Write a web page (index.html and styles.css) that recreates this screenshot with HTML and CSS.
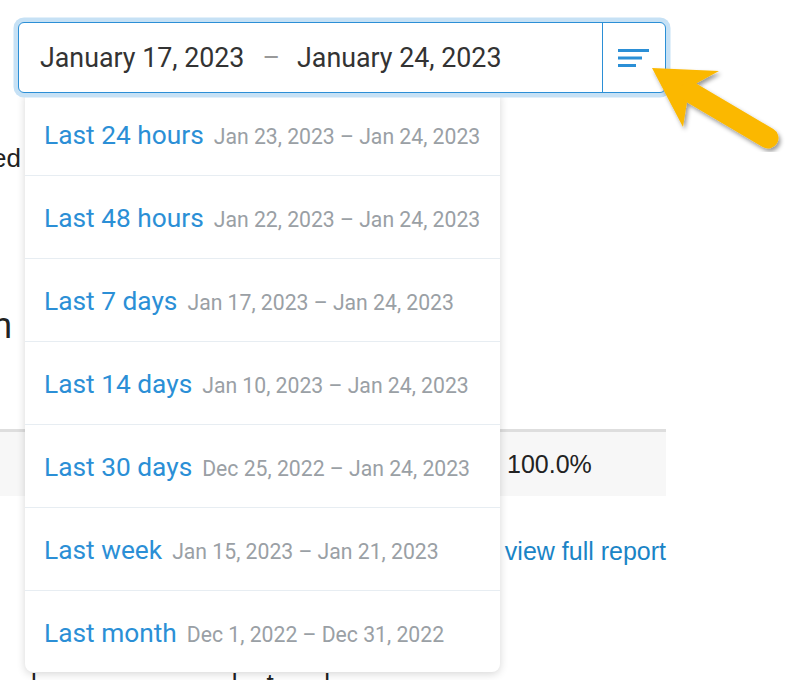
FILE: index.html
```html
<!DOCTYPE html>
<html>
<head>
<meta charset="utf-8">
<link rel="stylesheet" href="styles.css">
</head>
<body>
<div class="page">
  <div class="picker">
    <div class="dates">
      <span class="date">January 17, 2023</span>
      <span class="sep">–</span>
      <span class="date">January 24, 2023</span>
    </div>
    <div class="btn">
      <svg width="32" height="19" viewBox="0 0 32 19"><rect x="0" y="0" width="31" height="3" fill="#2b8fd6"/><rect x="0" y="7.5" width="24" height="3" fill="#2b8fd6"/><rect x="0" y="15" width="18" height="3" fill="#2b8fd6"/></svg>
    </div>
  </div>
  <div class="bg">
    <p class="frag1">ed</p>
    <p class="frag2">n</p>
    <div class="row"><span class="pct">100.0%</span></div>
    <div class="link-row"><a class="link">view full report</a></div>
    <p class="bottom">l&nbsp;&nbsp;&nbsp;&nbsp;&nbsp;&nbsp;&nbsp;&nbsp;&nbsp;&nbsp;&nbsp;&nbsp;&nbsp;&nbsp;&nbsp;&nbsp;&nbsp;&nbsp;&nbsp;&nbsp;&nbsp;&nbsp;&nbsp;&nbsp;&nbsp;&nbsp;&nbsp;l&nbsp;&nbsp;&nbsp;&nbsp;t&nbsp;&nbsp;&nbsp;&nbsp;&nbsp;&nbsp;&nbsp;l</p>
  </div>
  <ul class="menu">
    <li class="item"><span class="label">Last 24 hours</span><span class="range">Jan 23, 2023 – Jan 24, 2023</span></li>
    <li class="item"><span class="label">Last 48 hours</span><span class="range">Jan 22, 2023 – Jan 24, 2023</span></li>
    <li class="item"><span class="label">Last 7 days</span><span class="range">Jan 17, 2023 – Jan 24, 2023</span></li>
    <li class="item"><span class="label">Last 14 days</span><span class="range">Jan 10, 2023 – Jan 24, 2023</span></li>
    <li class="item"><span class="label">Last 30 days</span><span class="range">Dec 25, 2022 – Jan 24, 2023</span></li>
    <li class="item"><span class="label">Last week</span><span class="range">Jan 15, 2023 – Jan 21, 2023</span></li>
    <li class="item"><span class="label">Last month</span><span class="range">Dec 1, 2022 – Dec 31, 2022</span></li>
  </ul>
  <svg class="arrow" width="150" height="110" viewBox="0 0 150 110">
    <g filter="url(#sh)">
      <polygon points="12,18 79,21 57,33 47,52 43,77" fill="#fbb800"/>
      <line x1="50" y1="42" x2="128" y2="88" stroke="#fbb800" stroke-width="21" stroke-linecap="round"/>
    </g>
    <defs>
      <filter id="sh" x="-20%" y="-20%" width="140%" height="140%">
        <feDropShadow dx="2" dy="3" stdDeviation="2" flood-color="#000" flood-opacity="0.4"/>
      </filter>
    </defs>
  </svg>
</div>
</body>
</html>
```

FILE: styles.css
```css
html, body {
  margin: 0;
  padding: 0;
  background: #fff;
}
.page {
  position: relative;
  width: 790px;
  height: 680px;
  overflow: hidden;
  font-family: Roboto, "Liberation Sans", sans-serif;
}
.picker {
  position: relative;
  z-index: 3;
  margin: 22px 0 0 18px;
  width: 648px;
  height: 71px;
  box-sizing: border-box;
  border: 1.5px solid #2b8fd6;
  border-radius: 6px;
  box-shadow: 0 0 0 4.5px #c6e1f5;
  background: #fff;
  display: flex;
}
.dates {
  flex: 1;
  display: flex;
  align-items: center;
  padding-left: 21px;
  font-size: 26.8px;
  color: #333;
}
.sep {
  color: #999;
  margin: 0 17px 0 18px;
}
.btn {
  width: 63px;
  border-left: 1.5px solid #2b8fd6;
  display: flex;
  align-items: center;
  justify-content: center;
  padding-top: 2px;
  box-sizing: border-box;
}
.bg {
  font-family: "Liberation Sans", Arial, sans-serif;
  color: #222;
}
.frag1 {
  margin: 0;
  padding-top: 50px;
  font-size: 26px;
  line-height: 30px;
  margin-left: -8px;
}
.frag2 {
  margin: 0;
  padding-top: 133px;
  font-size: 36px;
  line-height: 40px;
  margin-left: -8px;
}
.row {
  margin-top: 83px;
  width: 666px;
  height: 64px;
  border-top: 3px solid #dedede;
  background: #f7f7f7;
  display: flex;
  align-items: center;
}
.pct {
  margin-left: 507px;
  font-size: 25px;
  color: #222;
}
.link-row {
  width: 666px;
  display: flex;
  justify-content: flex-end;
  margin-top: 40px;
}
.link {
  font-size: 25px;
  color: #1a84c6;
  line-height: 30px;
}
.bottom {
  margin: 0;
  padding-top: 102px;
  padding-left: 31px;
  font-size: 26px;
  line-height: 30px;
}
.menu {
  position: absolute;
  z-index: 2;
  top: 93px;
  left: 25px;
  width: 475px;
  margin: 0;
  padding: 0;
  list-style: none;
  background: #fff;
  border-radius: 0 0 8px 8px;
  box-shadow: 0 2px 8px rgba(0, 0, 0, 0.16);
}
.item {
  height: 83px;
  box-sizing: border-box;
  border-bottom: 1px solid #e7edf2;
  display: flex;
  align-items: center;
  padding-left: 19px;
  padding-top: 2px;
}
.item:last-child {
  border-bottom: none;
  height: 81px;
}
.label {
  font-size: 26.3px;
  color: #2b8fd6;
  margin-right: 10px;
}
.range {
  font-size: 21.2px;
  color: #9aa0a5;
  padding-top: 3px;
}
.arrow {
  position: absolute;
  z-index: 4;
  left: 640px;
  top: 50px;
}
```
